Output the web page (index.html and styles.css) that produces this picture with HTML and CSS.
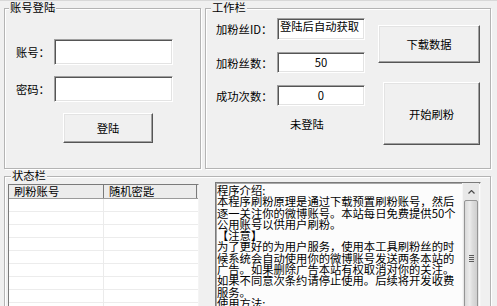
FILE: index.html
```html
<!DOCTYPE html>
<html lang="zh-CN">
<head>
<meta charset="utf-8">
<title>刷粉工具</title>
<link rel="stylesheet" href="styles.css">
</head>
<body>
<div class="win">
  <div class="top">
    <div class="group g-login">
      <div class="gtitle t-login">账号登陆</div>
      <div class="login">
        <div class="row"><div class="lbl1">账号：</div><div class="edit edit1"></div></div>
        <div class="row"><div class="lbl1">密码：</div><div class="edit edit1"></div></div>
        <div class="btn btn-login">登陆</div>
      </div>
    </div>
    <div class="group g-work">
      <div class="gtitle t-work">工作栏</div>
      <div class="work">
        <div class="wleft">
          <div class="frow"><div class="flbl">加粉丝ID：</div><div class="edit fedit f1">登陆后自动获取</div></div>
          <div class="frow r2"><div class="flbl">加粉丝数：</div><div class="edit fedit fc">50</div></div>
          <div class="frow r3"><div class="flbl">成功次数：</div><div class="edit fedit fc">0</div></div>
          <div class="state">未登陆</div>
        </div>
        <div class="wright">
          <div class="btn btn-dl">下载数据</div>
          <div class="btn btn-go">开始刷粉</div>
        </div>
      </div>
    </div>
  </div>
  <div class="group g-status">
    <div class="gtitle t-status">状态栏</div>
    <div class="panels">
      <div class="lv">
        <div class="lvhead">
          <div class="lvcol c1">刷粉账号</div>
          <div class="lvcol c2">随机密匙</div>
        </div>
        <div class="lvbody"></div>
      </div>
      <div class="tx">
        <div class="txt">程序介绍:<br>本程序刷粉原理是通过下载预置刷粉账号，然后<br>逐一关注你的微博账号。本站每日免费提供50个<br>公用账号以供用户刷粉。<br>【注意】<br>为了更好的为用户服务，使用本工具刷粉丝的时<br>候系统会自动使用你的微博账号发送两条本站的<br>广告。如果删除广告本站有权取消对你的关注。<br>如果不同意次条约请停止使用。后续将开发收费<br>服务。<br>使用方法:</div>
        <div class="sb">
          <div class="sbup"><svg width="7" height="4" viewBox="0 0 7 4"><path d="M0.5 3.5 L3.5 0.5 L6.5 3.5" fill="none" stroke="#4d4d4d" stroke-width="1.2"/></svg></div>
          <div class="thumb"><div class="grip"><i></i><i></i><i></i><i></i></div></div>
        </div>
      </div>
    </div>
  </div>
</div>
</body>
</html>
```
FILE: styles.css
```css
* { box-sizing: border-box; }
html, body { margin: 0; padding: 0; }
body {
  width: 497px;
  height: 306px;
  overflow: hidden;
  background: #f0f0f0;
  font-family: "Noto Sans CJK SC", sans-serif;
  font-size: 11.3px;
  color: #000;
}
.win {
  padding: 7px 0 0 4px;
  border-top: 1px solid #d8d8d8;
}
.top {
  display: flex;
  gap: 4px;
  height: 161px;
}
.group {
  border: 1px solid #b4b4b4;
  box-shadow: inset 1px 1px 0 #fff, 1px 1px 0 #fff;
}
.g-login { width: 197px; }
.g-work { width: 286px; }
.g-status { width: 487px; height: 140px; margin-top: 7px; }
.gtitle {
  width: fit-content;
  height: 13px;
  line-height: 13px;
  margin: -8px 0 -5px 4px;
  padding: 0 1px;
  background: #f0f0f0;
  white-space: nowrap;
}
.t-work { margin-left: 5px; }
.t-status { margin-left: 6px; }

.edit {
  background: #fff;
  border: 1px solid;
  border-color: #a0a0a0 #fff #fff #a0a0a0;
  box-shadow: inset 1px 1px 0 #555, inset -1px -1px 0 #e3e3e3;
}
.btn {
  display: flex;
  align-items: center;
  justify-content: center;
  background: #f0f0f0;
  border: 1px solid;
  border-color: #fff #555 #555 #fff;
  box-shadow: inset -1px -1px 0 #a0a0a0, inset 1px 1px 0 #e3e3e3;
  white-space: nowrap;
}

/* login group */
.login { padding: 30px 0 0 11px; }
.row { display: flex; align-items: center; height: 26px; }
.row + .row { margin-top: 11px; }
.lbl1 { width: 38px; white-space: nowrap; }
.edit1 { width: 119px; height: 26px; }
.btn-login { margin: 11px 0 0 47px; width: 90px; height: 30px; }

/* work group */
.work {
  display: flex;
  justify-content: space-between;
  padding: 9px 10px 0 10px;
}
.frow { display: flex; align-items: center; }
.r2, .r3 { margin-top: 12px; }
.flbl { width: 61px; white-space: nowrap; }
.fedit { width: 88px; height: 21px; line-height: 17px; white-space: nowrap; }
.f1 { height: 22px; padding: 1px 0 0 2px; line-height: 13px; }
.fc { text-align: center; padding-top: 1px; }
.state { margin: 12px 0 0 74px; line-height: 13px; }
.wright { display: flex; flex-direction: column; align-items: flex-end; }
.btn-dl { margin-top: 7px; width: 102px; height: 38px; }
.btn-go { margin-top: 19px; width: 97px; height: 63px; }

/* status group */
.panels {
  display: flex;
  align-items: flex-start;
  padding-left: 3px;
}
.lv {
  margin-top: 7px;
  width: 191px;
  height: 130px;
  background: #fff;
  border: 1px solid;
  border-color: #7a7a7a #f4f4f4 #f4f4f4 #7a7a7a;
  box-shadow: inset 1px 1px 0 #b0b0b0;
}
.lvhead {
  display: flex;
  height: 14px;
  background: #ececec;
  border-bottom: 1px solid #9a9a9a;
}
.lvcol {
  height: 13px;
  line-height: 13px;
  padding-left: 5px;
  border-right: 1px solid #7a7a7a;
  white-space: nowrap;
}
.c1 { width: 95px; }
.c2 { width: 93px; }
.lvbody {
  height: 114px;
  background-image:
    linear-gradient(90deg, transparent 94px, #ebebeb 94px, #ebebeb 95px, transparent 95px),
    repeating-linear-gradient(to bottom, #fff 0, #fff 12px, #ececec 12px, #ececec 13px);
}
.tx {
  display: flex;
  margin: 5px 0 0 16px;
  width: 266px;
  height: 130px;
  background: #fcfcfc;
  border: 1px solid;
  border-color: #7a7a7a #f4f4f4 #f4f4f4 #7a7a7a;
  box-shadow: inset 1px 1px 0 #a8a8a8;
}
.txt {
  flex: 1;
  padding: 2px 0 0 1px;
  line-height: 11.3px;
  white-space: nowrap;
  overflow: hidden;
}
.sb {
  width: 17px;
  margin-right: 1px;
  background: #e8e8e8;
  border-left: 1px solid #f6f6f6;
}
.sbup {
  height: 17px;
  display: flex;
  align-items: center;
  justify-content: center;
}
.thumb {
  height: 116px;
  margin: 0 1px;
  border: 1px solid #959595;
  border-radius: 2px;
  background: linear-gradient(90deg, #d9d9d9, #ececec 40%, #dedede 60%, #cfcfcf);
  display: flex;
  align-items: center;
  justify-content: center;
}
.grip { display: flex; flex-direction: column; gap: 1px; }
.grip i { display: block; width: 5px; height: 1px; background: #5a5a5a; }
```
